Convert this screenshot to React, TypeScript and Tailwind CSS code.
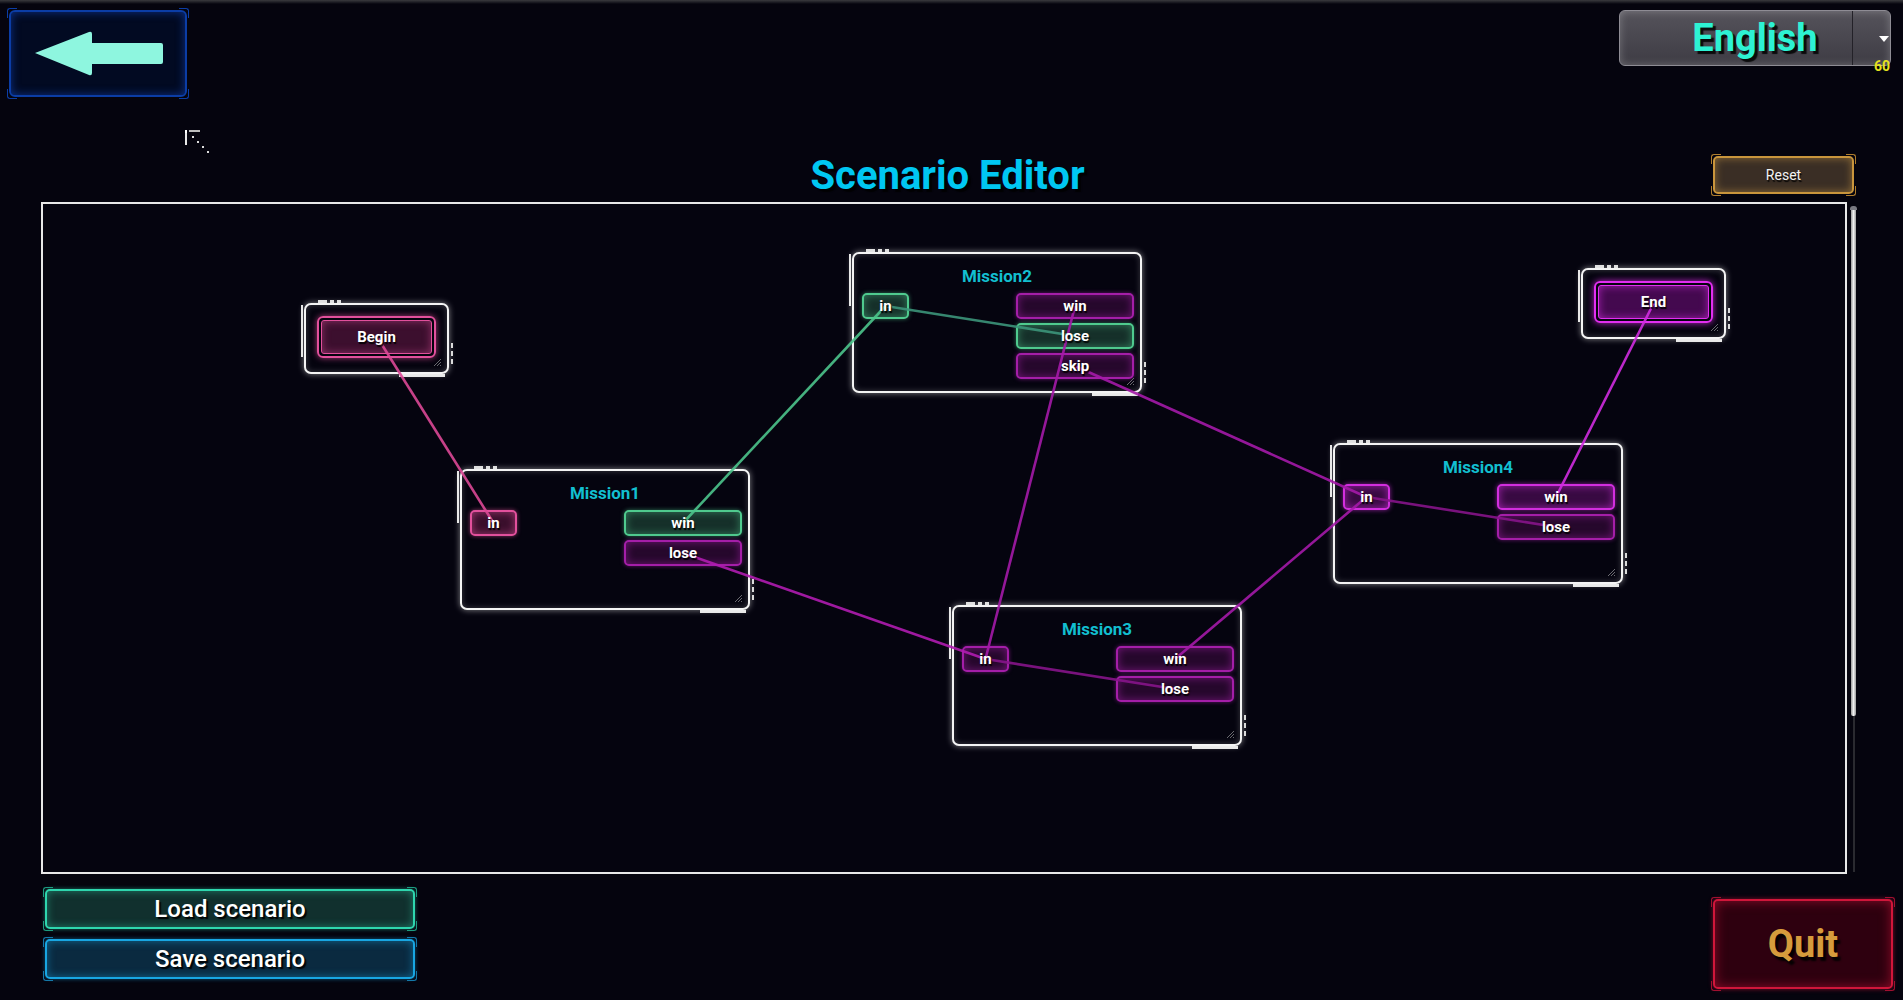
import React from "react";

// --- Types ---
type Tone = "pink" | "green" | "purple" | "magenta";

interface PortDef {
  label: string;
  tone: Tone;
}

interface MissionDef {
  title: string;
  x: number;
  y: number;
  input: Tone;
  outputs: PortDef[];
}

const toneClass: Record<Tone, string> = {
  pink: "border-[#e2509c] bg-[#3a0f2c] shadow-[inset_0_0_8px_rgba(226,80,156,0.6),0_0_4px_rgba(226,80,156,0.6)]",
  green: "border-[#4fca8e] bg-[#16302a] shadow-[inset_0_0_8px_rgba(79,202,142,0.5),0_0_4px_rgba(79,202,142,0.55)]",
  purple: "border-[#a41ea8] bg-[#26082c] shadow-[inset_0_0_8px_rgba(164,30,168,0.6),0_0_4px_rgba(164,30,168,0.6)]",
  magenta: "border-[#d22ede] bg-[#380a42] shadow-[inset_0_0_8px_rgba(210,46,222,0.65),0_0_5px_rgba(210,46,222,0.65)]",
};

// --- Scenario data ---
const missions: MissionDef[] = [
  {
    title: "Mission1",
    x: 417,
    y: 265,
    input: "pink",
    outputs: [
      { label: "win", tone: "green" },
      { label: "lose", tone: "purple" },
    ],
  },
  {
    title: "Mission2",
    x: 809,
    y: 48,
    input: "green",
    outputs: [
      { label: "win", tone: "purple" },
      { label: "lose", tone: "green" },
      { label: "skip", tone: "purple" },
    ],
  },
  {
    title: "Mission3",
    x: 909,
    y: 401,
    input: "purple",
    outputs: [
      { label: "win", tone: "purple" },
      { label: "lose", tone: "purple" },
    ],
  },
  {
    title: "Mission4",
    x: 1290,
    y: 239,
    input: "magenta",
    outputs: [
      { label: "win", tone: "magenta" },
      { label: "lose", tone: "purple" },
    ],
  },
];

const links: [number, number, number, number, string][] = [
  [333.5, 132, 450.5, 319, "#dc4896"],
  [640, 319, 842.5, 102, "#4cc48c"],
  [842.5, 102, 1032, 132, "#3c957a"],
  [640, 349, 942.5, 455, "#b01cb0"],
  [1032, 102, 942.5, 455, "#a41aa8"],
  [1032, 162, 1323.5, 293, "#a41aa8"],
  [1132, 455, 1323.5, 293, "#a41aa8"],
  [942.5, 455, 1132, 485, "#86148a"],
  [1323.5, 293, 1513, 323, "#86148a"],
  [1513, 293, 1610.5, 99.5, "#d02ce0"],
];

const Brackets: React.FC<{ c: string }> = ({ c }) => (
  <>
    <span className={`pointer-events-none absolute -left-[4px] -top-[4px] h-[10px] w-[10px] rounded-tl-[3px] border-l border-t ${c}`} />
    <span className={`pointer-events-none absolute -right-[4px] -top-[4px] h-[10px] w-[10px] rounded-tr-[3px] border-r border-t ${c}`} />
    <span className={`pointer-events-none absolute -bottom-[4px] -left-[4px] h-[10px] w-[10px] rounded-bl-[3px] border-b border-l ${c}`} />
    <span className={`pointer-events-none absolute -bottom-[4px] -right-[4px] h-[10px] w-[10px] rounded-br-[3px] border-b border-r ${c}`} />
  </>
);

const Port: React.FC<{ label: string; tone: Tone; wide?: boolean }> = ({ label, tone, wide }) => (
  <div
    className={`flex h-[26px] items-center justify-center rounded-[5px] border-2 ${toneClass[tone]} ${wide ? "w-[118px]" : "w-[47px]"}`}
  >
    <span className="relative z-20 text-[15px] font-bold leading-none text-white [text-shadow:1px_2px_1px_rgba(0,0,0,0.9)]">
      {label}
    </span>
  </div>
);

const Grip = () => (
  <svg className="absolute bottom-[5px] right-[5px]" width="9" height="9" viewBox="0 0 9 9">
    <path d="M1 8 L8 1 M4 8 L8 4 M7 8 L8 7" stroke="#6a6a70" strokeWidth="1" />
  </svg>
);

// cadre blanc des noeuds, avec ses petits ornements
const NodeFrame: React.FC<{ x: number; y: number; w: number; h: number; children: React.ReactNode }> = ({
  x,
  y,
  w,
  h,
  children,
}) => (
  <div className="absolute" style={{ left: x, top: y, width: w, height: h }}>
    <div className="absolute -top-[3px] left-[14px] flex gap-[3px]">
      <span className="h-[3px] w-[9px] bg-[#dcdcdc]" />
      <span className="h-[3px] w-[4px] bg-[#dcdcdc]" />
      <span className="h-[3px] w-[4px] bg-[#dcdcdc]" />
    </div>
    <span className="absolute -left-[3px] top-[2px] h-[52px] w-[2px] bg-[#e6e6e6]" />
    <span className="absolute -bottom-[3px] right-[4px] h-[3px] w-[46px] bg-[#e6e6e6]" />
    <span className="absolute -right-[4px] bottom-[10px] flex flex-col gap-[3px]">
      <span className="h-[5px] w-[2px] bg-[#d8d8d8]" />
      <span className="h-[5px] w-[2px] bg-[#d8d8d8]" />
      <span className="h-[5px] w-[2px] bg-[#d8d8d8]" />
    </span>
    <div className="relative h-full rounded-[7px] border-2 border-[#f4f4f4] bg-[#05040f] shadow-[0_0_6px_rgba(255,255,255,0.5),inset_0_0_6px_rgba(255,255,255,0.22)]">
      {children}
      <Grip />
    </div>
  </div>
);

const MissionNode: React.FC<{ m: MissionDef }> = ({ m }) => (
  <NodeFrame x={m.x} y={m.y} w={290} h={141}>
    <div className="pt-[12px] text-center text-[17px] font-bold leading-[20px] text-[#12bfd0]">{m.title}</div>
    <div className="mt-[7px] flex justify-between pl-[8px] pr-[6px]">
      <Port label="in" tone={m.input} />
      <div className="flex flex-col gap-[4px]">
        {m.outputs.map((p) => (
          <Port key={p.label} label={p.label} tone={p.tone} wide />
        ))}
      </div>
    </div>
  </NodeFrame>
);

const EdgeNode: React.FC<{ label: string; x: number; y: number; pink?: boolean }> = ({ label, x, y, pink }) => (
  <NodeFrame x={x} y={y} w={145} h={71}>
    <div className="p-[11px]">
      <div
        className={`rounded-[6px] border-2 p-[2px] ${
          pink
            ? "border-[#e2509c] shadow-[0_0_6px_rgba(226,80,156,0.7)]"
            : "border-[#e22ef0] shadow-[0_0_7px_rgba(226,46,240,0.8)]"
        }`}
      >
        <div
          className={`flex h-[34px] items-center justify-center rounded-[3px] border ${
            pink
              ? "border-[#e2509c] bg-[#3c0f2e] shadow-[inset_0_0_9px_rgba(226,80,156,0.5)]"
              : "border-[#e22ef0] bg-[#44094f] shadow-[inset_0_0_9px_rgba(226,46,240,0.6)]"
          }`}
        >
          <span className="relative z-20 text-[15px] font-bold leading-none text-white [text-shadow:1px_2px_1px_rgba(0,0,0,0.9)]">
            {label}
          </span>
        </div>
      </div>
    </div>
  </NodeFrame>
);

export default function App() {
  return (
    <div className="relative h-[1000px] w-full overflow-hidden bg-[#05040e] font-[Roboto,sans-serif] text-white">
      <div className="pointer-events-none absolute inset-x-0 top-0 h-[4px] bg-gradient-to-b from-[#3a3a3e] to-transparent" />

      {/* Barre du haut */}
      <div className="flex items-start justify-between pl-[9px] pr-[12px] pt-[10px]">
        <button className="relative h-[87px] w-[178px] rounded-[6px] border-2 border-[#0b3da6] bg-[#020a22] shadow-[inset_0_0_10px_rgba(20,80,220,0.55)]">
          <Brackets c="border-[#0b3da6]" />
          <svg className="absolute left-0 top-0" width="178" height="87" viewBox="0 0 178 87">
            <path
              d="M24 41 L78 20 Q81 19 81 22 L81 31 L150 31 Q152 31 152 33 L152 50 Q152 52 150 52 L81 52 L81 61 Q81 64 78 63 Z"
              fill="#8ef6df"
            />
          </svg>
        </button>

        <div className="relative h-[56px] w-[272px] rounded-[6px] border border-[#8e8c94] bg-gradient-to-b from-[#55535b] to-[#3e3c44] shadow-[inset_0_0_8px_rgba(255,255,255,0.25)]">
          <div className="flex h-full items-center justify-center text-[38px] font-bold leading-none text-[#2df2d3] [text-shadow:3px_3px_1px_rgba(0,0,0,0.85)]">
            English
          </div>
          <span className="absolute bottom-0 left-[232px] top-0 w-px bg-[#232128]" />
          <span className="absolute right-[1px] top-[25px] h-0 w-0 border-x-[5px] border-t-[6px] border-x-transparent border-t-white" />
          <span className="absolute -bottom-[8px] right-0 text-[14px] font-bold leading-none text-[#e6e21e]">60</span>
        </div>
      </div>

      <svg className="absolute left-[183px] top-[128px]" width="28" height="28" viewBox="0 0 28 28">
        <rect x="2" y="2" width="2" height="15" fill="#e8e8e8" />
        <rect x="2" y="2" width="2" height="3" fill="#ffffff" />
        <rect x="6" y="2" width="11" height="2" fill="#bdbdbd" />
        <path d="M9 8h2v2H9zM14 13h2v2h-2zM19 18h2v2h-2zM24 23h2v2h-2z" fill="#dcdcdc" />
      </svg>

      {/* Titre */}
      <div className="ml-[41px] mt-[55px] grid h-[48px] w-[1813px] grid-cols-[1fr_auto_1fr]">
        <div />
        <h1 className="text-[40px] font-bold leading-[48px] text-[#00c7f2] [text-shadow:3px_3px_1px_rgba(0,0,0,0.8)]">
          Scenario Editor
        </h1>
        <div className="flex justify-end">
          <button className="relative mt-[4px] h-[38px] w-[141px] rounded-[5px] border-2 border-[#c9953c] bg-[#3a2e25] text-[14px] text-[#f2f2f2] shadow-[inset_0_0_9px_rgba(214,160,70,0.55)] [text-shadow:1px_2px_1px_rgba(0,0,0,0.9)]">
            <Brackets c="border-[#b07e2e]" />
            Reset
          </button>
        </div>
      </div>

      {/* Zone d'édition */}
      <div className="ml-[41px] mt-[2px] flex gap-[3px]">
        <div className="relative h-[672px] w-[1806px] border-2 border-[#e8e8e8] bg-[#05040f]">
          <EdgeNode label="Begin" x={261} y={99} pink />
          <EdgeNode label="End" x={1538} y={64} />
          {missions.map((m) => (
            <MissionNode key={m.title} m={m} />
          ))}
          <svg className="pointer-events-none absolute left-0 top-0 z-10" width="1802" height="668">
            {links.map(([x1, y1, x2, y2, c], i) => (
              <line key={i} x1={x1} y1={y1} x2={x2} y2={y2} stroke={c} strokeWidth="2.6" strokeOpacity="0.9" />
            ))}
          </svg>
        </div>
        <div className="mt-[4px] flex h-[666px] w-[7px] flex-col">
          <div className="h-[4px] rounded-t-[3px] bg-[#7a7a82]" />
          <div className="mx-[1px] h-[506px] rounded-b-[2px] bg-gradient-to-r from-[#9a9a9a] via-[#f0f0f0] to-[#9a9a9a]" />
          <div className="mx-auto w-[2px] flex-1 bg-[#2a2a30]" />
        </div>
      </div>

      {/* Boutons du bas */}
      <div className="mt-[15px] flex items-start justify-between pl-[45px] pr-[10px]">
        <div className="flex flex-col gap-[10px]">
          <button className="relative h-[40px] w-[370px] rounded-[5px] border-2 border-[#2ed6ae] bg-[#11302e] text-[24px] font-medium leading-none text-white shadow-[inset_0_0_9px_rgba(46,214,174,0.45),0_0_4px_rgba(46,214,174,0.5)] [text-shadow:2px_2px_1px_rgba(0,0,0,0.9)]">
            <Brackets c="border-[#1d9c80]" />
            Load scenario
          </button>
          <button className="relative h-[40px] w-[370px] rounded-[5px] border-2 border-[#18a6e2] bg-[#0a2a40] text-[24px] font-medium leading-none text-white shadow-[inset_0_0_9px_rgba(24,166,226,0.5),0_0_4px_rgba(24,166,226,0.5)] [text-shadow:2px_2px_1px_rgba(0,0,0,0.9)]">
            <Brackets c="border-[#1478a8]" />
            Save scenario
          </button>
        </div>
        <button className="relative mt-[10px] h-[90px] w-[180px] rounded-[5px] border-2 border-[#d0163a] bg-[#2e000f] text-[38px] font-bold leading-none text-[#d69b3c] shadow-[inset_0_0_12px_rgba(220,20,60,0.55),0_0_5px_rgba(220,20,60,0.55)] [text-shadow:3px_4px_2px_rgba(0,0,0,0.9)]">
          <Brackets c="border-[#a01030]" />
          Quit
        </button>
      </div>
    </div>
  );
}
